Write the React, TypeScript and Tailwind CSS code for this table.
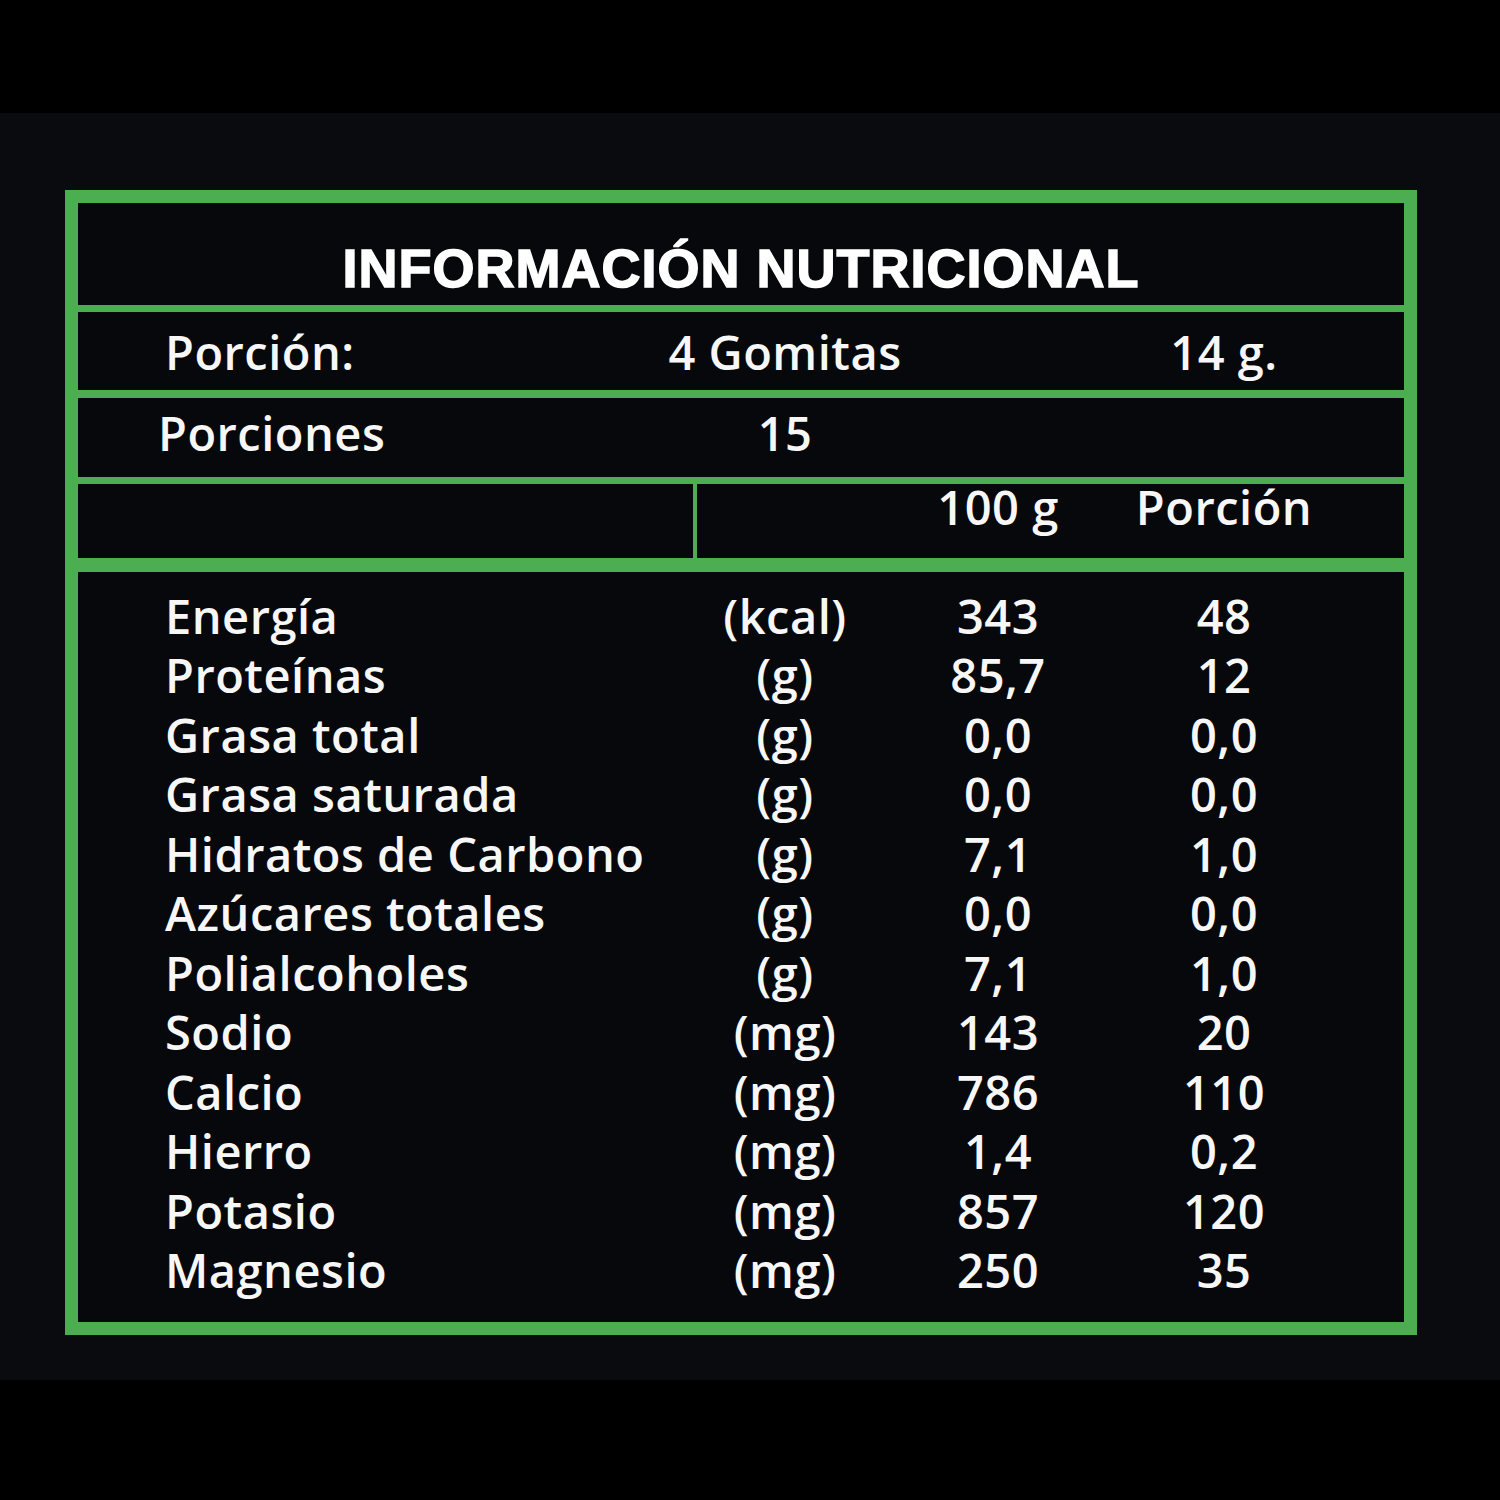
import React from 'react';

const rows = [
  { label: 'Energía', unit: '(kcal)', per100: '343', portion: '48' },
  { label: 'Proteínas', unit: '(g)', per100: '85,7', portion: '12' },
  { label: 'Grasa total', unit: '(g)', per100: '0,0', portion: '0,0' },
  { label: 'Grasa saturada', unit: '(g)', per100: '0,0', portion: '0,0' },
  { label: 'Hidratos de Carbono', unit: '(g)', per100: '7,1', portion: '1,0' },
  { label: 'Azúcares totales', unit: '(g)', per100: '0,0', portion: '0,0' },
  { label: 'Polialcoholes', unit: '(g)', per100: '7,1', portion: '1,0' },
  { label: 'Sodio', unit: '(mg)', per100: '143', portion: '20' },
  { label: 'Calcio', unit: '(mg)', per100: '786', portion: '110' },
  { label: 'Hierro', unit: '(mg)', per100: '1,4', portion: '0,2' },
  { label: 'Potasio', unit: '(mg)', per100: '857', portion: '120' },
  { label: 'Magnesio', unit: '(mg)', per100: '250', portion: '35' },
];

const cols = 'grid grid-cols-[642px_130px_296px_156px]';
const cell = 'flex justify-center whitespace-nowrap';

const App = () => {
  return (
    <div className="h-[1500px] bg-black pt-[113px] font-['Open_Sans',sans-serif] font-semibold text-[47px] tracking-[0.5px] text-[#f7f7f7]">
      <div className="h-[1267px] bg-[#0a0b0f] pl-[65px] pt-[77px]">
        <div className="flex h-[1145px] w-[1352px] flex-col border-[13px] border-[#4cae50] bg-[#07080b]">
          {/* Title */}
          <div className="flex h-[102px] justify-center pt-[38px]">
            <h1 className="font-['Liberation_Sans',Arial,sans-serif] text-[54px] font-bold leading-[54px] tracking-[1px] text-white [-webkit-text-stroke:1.5px_white]">
              INFORMACIÓN NUTRICIONAL
            </h1>
          </div>
          <div className="h-[7px] bg-[#4cae50]" />

          {/* Porción */}
          <div className={`${cols} h-[78px] pt-[17px] leading-[46px]`}>
            <div className="pl-[87px]">Porción:</div>
            <div className={cell}>4 Gomitas</div>
            <div />
            <div className={cell}>14 g.</div>
          </div>
          <div className="h-[8px] bg-[#4cae50]" />

          {/* Porciones */}
          <div className={`${cols} h-[79px] pt-[12px] leading-[46px]`}>
            <div className="pl-[80px]">Porciones</div>
            <div className={cell}>15</div>
          </div>
          <div className="h-[7px] bg-[#4cae50]" />

          {/* Column headers */}
          <div className={`${cols} h-[74px] leading-[46px]`}>
            <div className="h-[78px] w-[619px] border-r-4 border-[#4cae50]" />
            <div />
            <div className={cell}>100 g</div>
            <div className={cell}>Porción</div>
          </div>
          <div className="h-[14px] bg-[#4cae50]" />

          {/* Nutrients */}
          <div className="flex-1 pt-[15px] leading-[59.45px]">
            {rows.map((r) => (
              <div key={r.label} className={cols}>
                <div className="pl-[87px] whitespace-nowrap">{r.label}</div>
                <div className={cell}>{r.unit}</div>
                <div className={cell}>{r.per100}</div>
                <div className={cell}>{r.portion}</div>
              </div>
            ))}
          </div>
        </div>
      </div>
    </div>
  );
};

export default App;
